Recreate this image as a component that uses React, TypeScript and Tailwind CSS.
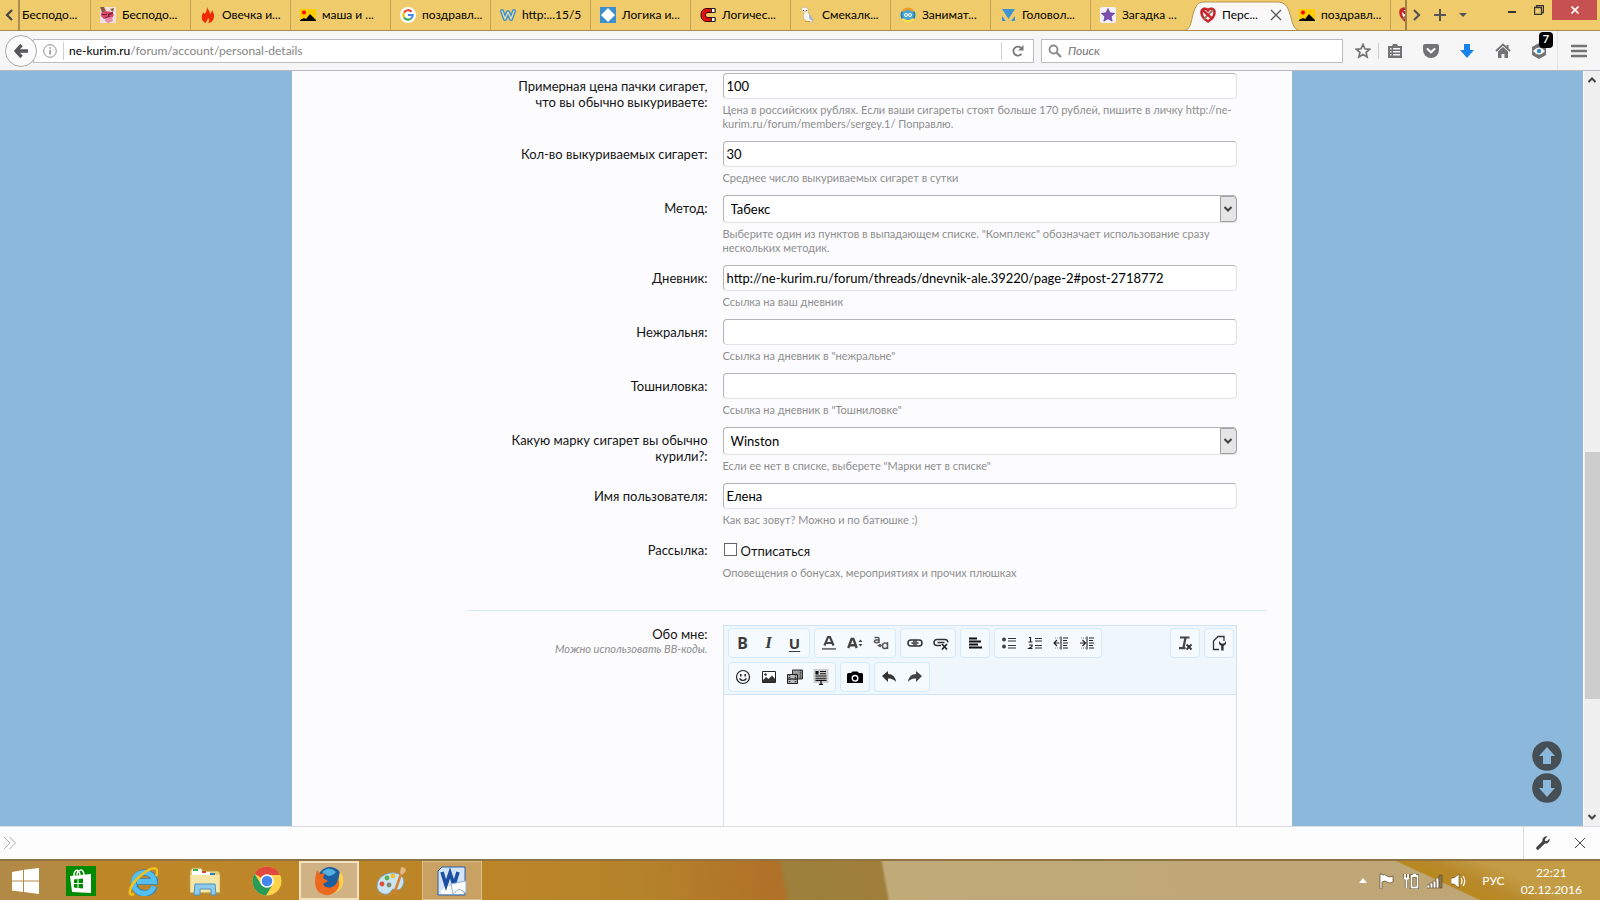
import { useState } from "react";
import type { ReactNode } from "react";

const tabs = [
  { title: "Бесподо...", icon: "anime" },
  { title: "Овечка и...", icon: "flame" },
  { title: "маша и ...", icon: "picture" },
  { title: "поздравл...", icon: "google" },
  { title: "http:...15/5", icon: "w" },
  { title: "Логика и...", icon: "diamond" },
  { title: "Логичес...", icon: "magnet" },
  { title: "Смекалк...", icon: "owl" },
  { title: "Занимат...", icon: "ring" },
  { title: "Головол...", icon: "triangle" },
  { title: "Загадка ...", icon: "star" },
];

function Favicon({ name }: { name: string }) {
  return (
    <svg viewBox="0 0 16 16" className="size-4 shrink-0" aria-hidden="true">
      {name === "anime" && (
        <>
          <path fill="#efe0e0" d="M0 0h16v16H0z" />
          <path fill="#8b5a3a" d="M0 0h4l2 4-4 2zM10 2l4-1-1 4z" />
          <path fill="#d9486e" d="M1 6l5-2 6 1 2 3-2 3-8 1-3-3z" />
          <path fill="#7a2038" d="M2 7h5v1H2zM8 7l5-2v1.500L8 9zM5 10l5-1v1l-4 1z" />
          <path fill="#e88ba6" d="M6 11l6-1 1 4-5 2-3-2z" />
        </>
      )}
      {name === "flame" && (
        <path fill="#f02a00" d="M7 0c1 3 3 4 3 7 1-1 2-2 2-4 2 3 3 7 1 10-1 2-3 3-5 3 2-2 1-4 0-5 0 2-2 3-2 5-3-1-5-4-4-7 0-2 1-2 1-4l1.500 2C6.500 5 7 3 7 0z" />
      )}
      {name === "picture" && (
        <>
          <path fill="#ffcc00" d="M0 2h16v12H0z" />
          <circle cx="4" cy="5.500" r="2" fill="#f00" />
          <path fill="#000" d="M0 14v-1l4-2 2 1 4-5 3 3 3 3v1z" />
        </>
      )}
      {name === "google" && (
        <>
          <circle cx="8" cy="8" r="8" fill="#fff" />
          <g fill="none" strokeWidth="2.200">
            <path stroke="#ea4335" d="M11.500 4.700A4.700 4.700 0 0 0 4 5.600" />
            <path stroke="#fbbc05" d="M4 5.600a4.700 4.700 0 0 0 0 4.900" />
            <path stroke="#34a853" d="M4 10.500a4.700 4.700 0 0 0 7 1" />
            <path stroke="#4285f4" d="M11 11.500A4.500 4.500 0 0 0 12.700 8H8" />
          </g>
        </>
      )}
      {name === "w" && (
        <g fill="none" strokeLinejoin="round" strokeLinecap="round">
          <path stroke="#3f8fc8" strokeWidth="4" d="M2 4l3 8 3-7 3 7 3-8" />
          <path stroke="#e3dfb4" strokeWidth="1.300" d="M2 4l3 8 3-7 3 7 3-8" />
        </g>
      )}
      {name === "diamond" && (
        <>
          <path fill="#3b8ed0" d="M0 0h16v16H0z" />
          <path fill="#fff" d="M8 1l7 7-7 7-7-7z" />
        </>
      )}
      {name === "magnet" && (
        <>
          <path fill="#e01010" stroke="#3a0000" d="M15 1.500H7C3 1.500 1 4 1 8s2 6.500 6 6.500h8v-4H8C6 10.500 5.500 9.500 5.500 8S6 5.500 8 5.500h7z" />
          <path fill="#fff" stroke="#222" d="M11.500 1.500h3.500v4h-3.500zM11.500 10.500h3.500v4h-3.500z" />
        </>
      )}
      {name === "owl" && (
        <>
          <path fill="#f4f4f0" stroke="#b5b09a" strokeWidth=".6" d="M2 1c2-1 5-1 6 1v4c3 2 5 5 5 9-3 0-6 0-8-2-2-2-2-4-1-7-2-2-3-3-2-5z" />
          <path fill="#333" d="M3 3h1v1H3zM6 3h1v1H6z" />
          <path fill="#e0a030" d="M4 4h2l-1 2zM5 14h5v1H5z" />
          <path fill="#a9b6c4" d="M9 7l4 5v3l-4-4z" />
        </>
      )}
      {name === "ring" && (
        <>
          <circle cx="8" cy="8" r="6" fill="#4ba6d6" />
          <path fill="none" stroke="#f29a1e" strokeWidth="2.400" d="M3 4a6.500 6.500 0 0 1 10 0" />
          <path fill="none" stroke="#ffe14d" strokeWidth="2.400" d="M3 12a6.500 6.500 0 0 0 10 0" />
          <path fill="none" stroke="#2383bd" strokeWidth="2" d="M2.500 4.500a7 7 0 0 0 0 7M13.500 4.500a7 7 0 0 1 0 7" />
          <circle cx="6" cy="8" r="1.500" fill="none" stroke="#fff" />
          <circle cx="10" cy="8" r="1.500" fill="none" stroke="#fff" />
        </>
      )}
      {name === "triangle" && <path fill="#3d94d1" d="M2 2h13L8.500 12zM2 9l4 5H2zM15 9l-4 5h4z" />}
      {name === "star" && (
        <>
          <rect width="16" height="16" rx="2" fill="#f3f0fa" />
          <path fill="#7c4fb0" stroke="#54308a" strokeWidth=".6" d="M8 1.500l2 4.300 4.700.5-3.500 3.200 1 4.700L8 11.800l-4.200 2.400 1-4.700L1.300 6.300 6 5.800z" />
        </>
      )}
      {name === "nosmoke" && (
        <>
          <path fill="#fff" stroke="#c9252b" strokeWidth="2.600" d="M8 14.500C4 12 1.500 9 1.500 5.500c0-4 4.500-5 6.500-2 2-3 6.500-2 6.500 2C14.500 9 12 12 8 14.500z" />
          <path stroke="#9a7a66" strokeWidth="2" d="M4 12l9-9" />
          <path stroke="#c9252b" strokeWidth="2.400" d="M2.500 3l10 9" />
        </>
      )}
    </svg>
  );
}

function TabBar() {
  return (
    <div className="flex h-[31px] shrink-0 items-stretch overflow-hidden border-b border-[#a9894c] bg-[#f0cb6c] text-[12px] text-black">
      <button aria-label="Прокрутить вкладки назад" className="flex w-5 shrink-0 items-center justify-center border-r-2 border-[#a98d4f]">
        <svg viewBox="0 0 8 12" className="h-3 w-2">
          <path d="M7 1L2 6l5 5" fill="none" stroke="#444" strokeWidth="2.200" />
        </svg>
      </button>
      <button className="w-[70px] shrink-0 truncate pl-0.5 text-left">Бесподо...</button>
      {tabs.map((tab) => (
        <button key={tab.title} className="flex w-[100px] shrink-0 items-center gap-1.5 whitespace-nowrap pl-2.5 shadow-[inset_1px_0_0_#c4a252]">
          <Favicon name={tab.icon} />
          {tab.title}
        </button>
      ))}
      <div className="relative flex w-[109px] shrink-0 items-center">
        <svg viewBox="0 0 120 31" className="absolute -bottom-px -left-2 h-[31px] w-[120px]" aria-hidden="true">
          <path d="M0 31C10 31 9 19 12 11C15 3 17 2 23 2H95C101 2 104 4 107 11C110 19 110 31 120 31Z" fill="#f8f8f8" stroke="#b8954a" />
        </svg>
        <button className="relative flex items-center gap-1.5 pl-2.5">
          <Favicon name="nosmoke" />
          Перс...
        </button>
        <button aria-label="Закрыть вкладку" className="relative ml-3">
          <svg viewBox="0 0 12 12" className="block size-3">
            <path d="M1 1l10 10M11 1L1 11" stroke="#555" strokeWidth="1.300" />
          </svg>
        </button>
      </div>
      <button className="flex w-[92px] shrink-0 items-center gap-1.5 whitespace-nowrap border-r border-[#c4a252]">
        <Favicon name="picture" />
        поздравл...
      </button>
      <div className="flex w-4 shrink-0 items-center overflow-hidden border-r-2 border-[#9d8248] pl-2">
        <Favicon name="nosmoke" />
      </div>
      <button aria-label="Прокрутить вкладки вперёд" className="flex w-5 shrink-0 items-center justify-center">
        <svg viewBox="0 0 8 12" className="h-3 w-2">
          <path d="M1 1l5 5-5 5" fill="none" stroke="#555" strokeWidth="2.200" />
        </svg>
      </button>
      <button aria-label="Новая вкладка" className="flex w-[26px] shrink-0 items-center justify-center">
        <svg viewBox="0 0 12 12" className="size-3">
          <path d="M6 0v12M0 6h12" stroke="#555" strokeWidth="2" />
        </svg>
      </button>
      <button aria-label="Список вкладок" className="flex w-5 shrink-0 items-center justify-center">
        <svg viewBox="0 0 8 4" className="h-1 w-2">
          <path d="M0 0h8L4 4z" fill="#555" />
        </svg>
      </button>
      <div className="mr-[3px] ml-auto flex h-5 items-stretch">
        <button aria-label="Свернуть" className="flex w-[26px] items-center justify-center">
          <svg viewBox="0 0 8 12" className="h-3 w-2">
            <path d="M0 7h8v2H0z" fill="#333" />
          </svg>
        </button>
        <button aria-label="Восстановить" className="flex w-[27px] items-center justify-center">
          <svg viewBox="0 0 10 10" className="size-2.5">
            <path d="M.5 2.500h7v7h-7zM2.500 2V.5h7v7H8" fill="none" stroke="#333" strokeWidth="1.300" />
          </svg>
        </button>
        <button aria-label="Закрыть" className="flex w-[45px] items-center justify-center bg-[#c75050]">
          <svg viewBox="0 0 8 8" className="size-2">
            <path d="M.5.500l7 7M7.500.500l-7 7" stroke="#fff" strokeWidth="1.600" />
          </svg>
        </button>
      </div>
    </div>
  );
}

function NavBar() {
  return (
    <div className="flex h-10 shrink-0 items-center border-b border-[#b8b8c0] bg-[#f6f6f7]">
      <button aria-label="Назад" className="z-10 ml-[5px] flex size-8 shrink-0 items-center justify-center rounded-full border border-[#a9a9ad] bg-[#fbfbfb]">
        <svg viewBox="0 0 14 14" className="size-3.5">
          <path d="M7.500 1L2 7l5.500 6M2 7h12" fill="none" stroke="#58585b" strokeWidth="3.400" />
        </svg>
      </button>
      <div className="-ml-1 flex h-6 flex-1 items-center border border-[#bcbcc4] bg-white pl-[9px]">
        <svg viewBox="0 0 14 14" className="size-3.5 shrink-0" aria-hidden="true">
          <circle cx="7" cy="7" r="6.300" fill="none" stroke="#8c8c8c" />
          <path d="M6.300 6h1.500v4.500H6.300zM6.300 3.300h1.500v1.500H6.300z" fill="#8c8c8c" />
        </svg>
        <div className="ml-[6px] h-[18px] w-px bg-[#d0d0d0]" />
        <a href="#address" className="ml-[5px] flex-1 text-[12px] text-[#858585]">
          <span className="text-black">ne-kurim.ru</span>/forum/account/personal-details
        </a>
        <button aria-label="Обновить" className="flex h-[18px] w-8 items-center justify-center border-l border-[#d0d0d0]">
          <svg viewBox="0 0 12 12" className="size-3">
            <path d="M9.500 8.800A4.500 4.500 0 1 1 9 2.800" fill="none" stroke="#777" strokeWidth="1.800" />
            <path d="M11.500 0v5.500H6z" fill="#777" />
          </svg>
        </button>
      </div>
      <label className="ml-[7px] flex h-6 w-[302px] shrink-0 items-center border border-[#bcbcc4] bg-white pl-1.5">
        <svg viewBox="0 0 14 14" className="size-3.5 shrink-0" aria-hidden="true">
          <circle cx="5.500" cy="5.500" r="4" fill="none" stroke="#8a8a8a" strokeWidth="1.800" />
          <path d="M8.500 8.500l4.500 4.500" stroke="#8a8a8a" strokeWidth="2.200" />
        </svg>
        <input aria-label="Поиск" placeholder="Поиск" className="ml-1.5 w-full bg-transparent text-[12px] outline-none placeholder:italic placeholder:text-[#757575]" />
      </label>
      <div className="flex h-full shrink-0 items-center text-[#737376]">
        <button aria-label="Добавить в закладки" className="ml-3">
          <svg viewBox="0 0 16 16" className="size-4">
            <path d="M8 1.500l1.900 4.300 4.700.5-3.500 3.100 1 4.600L8 11.600 3.900 14l1-4.600L1.400 6.300l4.700-.5z" fill="none" stroke="currentColor" strokeWidth="1.700" />
          </svg>
        </button>
        <div className="ml-[7px] h-4 w-px bg-[#cfcfcf]" />
        <button aria-label="Закладки" className="ml-2">
          <svg viewBox="0 0 16 16" className="size-4">
            <path d="M1 3h4l1-2h4l1 2h4v12H1z" fill="currentColor" />
            <path d="M3 5.800h1.500M6 5.800h7M3 8.800h1.500M6 8.800h7M3 11.800h1.500M6 11.800h7" stroke="#f6f6f7" strokeWidth="1.500" />
          </svg>
        </button>
        <button aria-label="Pocket" className="ml-5">
          <svg viewBox="0 0 16 16" className="size-4">
            <path d="M0 3q0-2 2-2h12q2 0 2 2v4a8 8 0 0 1-16 0z" fill="currentColor" />
            <path d="M4.500 6L8 9.300 11.500 6" fill="none" stroke="#fff" strokeWidth="2" strokeLinecap="round" />
          </svg>
        </button>
        <button aria-label="Загрузки" className="ml-5">
          <svg viewBox="0 0 16 16" className="size-4">
            <path d="M5 1h6v6h4l-7 8-7-8h4z" fill="#1a80ea" />
          </svg>
        </button>
        <button aria-label="Домой" className="ml-5">
          <svg viewBox="0 0 16 16" className="size-4">
            <path d="M1 8l7-6.500L15 8" fill="none" stroke="currentColor" strokeWidth="1.800" />
            <path d="M3 8.500l5-4.500 5 4.500V15H9.500v-4h-3v4H3zM11.500 2h2v3h-2z" fill="currentColor" />
          </svg>
        </button>
        <button aria-label="Ghostery: 7" className="relative ml-5">
          <svg viewBox="0 0 16 16" className="size-4">
            <path d="M8 0l7 4v8l-7 4-7-4V4z" fill="currentColor" />
            <path d="M2 8q6-7 12 0-6 7-12 0z" fill="#fff" />
            <circle cx="8" cy="8" r="2.200" fill="#2e8fc0" />
          </svg>
          <span className="absolute -top-[11px] left-2 flex h-4 w-3.5 items-center justify-center rounded-sm bg-black text-[11px] font-bold text-white">7</span>
        </button>
        <button aria-label="Меню" className="ml-2.5 flex h-full w-[43px] items-center justify-center border-l border-[#e4e4e6]">
          <svg viewBox="0 0 16 14" className="h-3.5 w-4">
            <path d="M1 2h14M1 7h14M1 12h14" stroke="currentColor" strokeWidth="2.600" strokeLinecap="round" />
          </svg>
        </button>
      </div>
    </div>
  );
}

const inputStyle =
  "block h-[26px] w-full rounded-[4px] border border-[#e2e2e5] border-t-[#b4b4b8] border-l-[#b4b4b8] bg-white pl-[3px] text-[13px] text-black outline-none";

function Row({ id, label, hint, children }: { id: string; label: string; hint: string; children: ReactNode }) {
  return (
    <div className="flex">
      <label htmlFor={id} className="w-[241px] shrink-0 pt-[5px] pl-8 text-right text-[13px] leading-4 text-[#141414]">
        {label}
      </label>
      <div className="ml-[15px] flex-1 pb-2.5">
        {children}
        <p className="mt-1 text-[11px] leading-[14px] text-[#8e8e8e]">{hint}</p>
      </div>
    </div>
  );
}

function TextRow({ id, label, hint, value = "" }: { id: string; label: string; hint: string; value?: string }) {
  return (
    <Row id={id} label={label} hint={hint}>
      <input id={id} type="text" defaultValue={value} className={inputStyle} />
    </Row>
  );
}

function SelectRow({ id, label, hint, value }: { id: string; label: string; hint: string; value: string }) {
  return (
    <Row id={id} label={label} hint={hint}>
      <div className="relative">
        <select id={id} className="block h-7 w-full appearance-none rounded-[4px] border border-[#e2e2e5] border-t-[#b4b4b8] border-l-[#b4b4b8] bg-white pt-px pl-[7px] text-[13px] text-black outline-none">
          <option>{value}</option>
        </select>
        <span className="pointer-events-none absolute inset-y-px right-0 flex w-[17px] items-center justify-center rounded-r-sm border border-[#a0a0a3] bg-[#e6e6e6]">
          <svg viewBox="0 0 8 6" className="h-1.5 w-2">
            <path d="M.5 1L4 4.500 7.500 1" fill="none" stroke="#444" strokeWidth="2" />
          </svg>
        </span>
      </div>
    </Row>
  );
}

const toolIcons: Record<string, ReactNode> = {
  "Цвет текста": <><path d="M3.500 10.500L7 2h2l3.500 8.500M5 8h6" fill="none" stroke="#444" strokeWidth="2.200" /><path d="M1 13h14v1.800H1z" fill="#777" /></>,
  "Размер": <><path d="M1.300 13L4.600 4h1.800l3.300 9M2.800 10.300h5.500" fill="none" stroke="#444" strokeWidth="2.400" /><path d="M11.500 7l2-2.500 2 2.500zM11.500 9l2 2.500 2-2.500z" fill="#444" /></>,
  "Шрифт": <><path d="M1.500 2.500h3q1.500 0 1.500 1.500V8M6 5H3Q1.500 5 1.500 6.300T3 7.700q2 0 3-1M14.500 7v7M14.500 9.500Q13.500 8 12 8q-2.500 0-2.500 2.800T12 13.500q1.500 0 2.500-1.500M4.500 10.500h3M6.500 9L8 10.500 6.500 12" fill="none" stroke="#555" strokeWidth="1.500" /></>,
  "Ссылка": <><rect x="1" y="5" width="14" height="6" rx="3" fill="none" stroke="#333" strokeWidth="1.500" /><path d="M4.500 8h7M6.500 5.500l1 1.200M9.500 5.500l-1 1.200M6.500 10.500l1-1.200M9.500 10.500l-1-1.200" stroke="#333" strokeWidth="1.500" /></>,
  "Убрать ссылку": <><path d="M8 10.500H4a3 3 0 0 1 0-6h8q2.500 0 3 2.800M4.500 7.500h7" fill="none" stroke="#333" strokeWidth="1.500" /><path d="M9 9l5 5.500M14 9l-5 5.500" stroke="#222" strokeWidth="1.700" /></>,
  "Выравнивание": <path d="M2 3.500h8M2 6.500h12M2 9.500h9M2 12.500h13" stroke="#111" strokeWidth="1.800" />,
  "Маркированный список": <><circle cx="3" cy="4.500" r="2" fill="#444" /><circle cx="3" cy="11.500" r="2" fill="#444" /><path d="M7 3.500h8M7 6h8M7 10.500h8M7 13h8" stroke="#333" /></>,
  "Нумерованный список": <><path d="M2 2.500h1.500v4.500M1.500 7h4M2 10h3v1.500L2 13.500h3.500" fill="none" stroke="#222" strokeWidth="1.200" /><path d="M8 3.500h7M8 6h7M8 10.500h7M8 13h7" stroke="#333" /></>,
  "Уменьшить отступ": <><path d="M8 1.500v13M10 3h5M10 5.500h4M10 8h5M10 10.500h4M10 13h5" stroke="#222" strokeWidth="1.100" /><path d="M2 3h5M2 13h5" stroke="#888" strokeDasharray="1 1" /><path d="M6.500 8H1M4 5L1 8l3 3" fill="none" stroke="#222" strokeWidth="1.200" /></>,
  "Увеличить отступ": <><path d="M8 1.500v13M10 3h5M10 5.500h4M10 8h5M10 10.500h4M10 13h5" stroke="#222" strokeWidth="1.100" /><path d="M2 3h5M2 13h5" stroke="#888" strokeDasharray="1 1" /><path d="M1 8h5M3.500 5l3 3-3 3" fill="none" stroke="#222" strokeWidth="1.200" /></>,
  "Очистить": <><path d="M3 2.500h9.500M8.500 2.500L6.500 12.500M2 13.200h6.500" stroke="#444" strokeWidth="2.200" /><path d="M9.500 9.500l5 5M14.500 9.500l-5 5" stroke="#333" strokeWidth="1.800" /></>,
  "Исходный код": <><path d="M8 14.500H2.500V6L7 1.500h6V6" fill="none" stroke="#333" strokeWidth="1.300" /><path d="M8 6v3l2.200 2V15.500h2.400V11L15 9V6l-2 2.500h-2.800z" fill="#333" /></>,
  "Смайлы": <><circle cx="8" cy="8" r="6.500" fill="none" stroke="#222" strokeWidth="1.200" /><path d="M5 5h1.500v2.500H5zM9.500 5H11v2.500H9.500z" fill="#222" /><path d="M4.500 9.500q3.500 4 7 0" fill="none" stroke="#222" strokeWidth="1.200" /></>,
  "Изображение": <><path d="M1.500 2.500h13v11h-13z" fill="#fff" stroke="#222" /><circle cx="4.500" cy="5.500" r="1.300" fill="#333" /><path d="M2 13v-2l3-3 2.500 2L11 6.500l3 3.500v3z" fill="#333" /></>,
  "Медиа": <><path d="M5.500 1h10v9h-10z" fill="#999" stroke="#333" /><path d="M.5 5.500h10v9H.5z" fill="#bbb" stroke="#222" /><path d="M2.500 5.500v9M8.500 5.500v9M13.500 1v9" stroke="#333" strokeWidth="1.600" strokeDasharray="1.200 1" /><path d="M1 10h9" stroke="#222" strokeWidth="1.200" /></>,
  "Вставить": <><path d="M.5 0h15v14H.5z" fill="#ccc" /><path d="M2.500 2h3v3.500h-3z" fill="#111" /><path d="M7 2.500h6M7 4.800h6M2.500 7h11M2.500 9.200h11M2.500 11.400h11" stroke="#111" strokeWidth="1.100" /><path d="M8 12v4M6 15.500h4" stroke="#111" strokeWidth="1.300" /></>,
  "Камера": <><path d="M0 5.500Q0 4 1.500 4H4l1.500-1.500h5L12 4h2.500Q16 4 16 5.500V14H0z" fill="#000" /><circle cx="8" cy="9.300" r="2.800" fill="none" stroke="#fff" strokeWidth="1.400" /></>,
  "Отменить": <path d="M1 7l6-5v3q7 0 8 8-3-4-8-3.500V13z" fill="#333" />,
  "Повторить": <path d="M15 7L9 2v3q-7 0-8 8 3-4 8-3.500V13z" fill="#444" />,
};

function ToolGroup({ items }: { items: string[] }) {
  return (
    <div className="flex rounded-sm border border-[#d3e9f8] bg-[#f4fafe] p-px">
      {items.map((item) => (
        <button key={item} type="button" title={item} className="flex size-[26px] items-center justify-center font-['Noto_Sans',sans-serif] text-[16px] font-bold text-[#3c3c3c]">
          {item === "B" && <span>B</span>}
          {item === "I" && <span className="font-['Liberation_Serif',serif] text-[17px] italic">I</span>}
          {item === "U" && <span className="text-[15px] underline underline-offset-2">U</span>}
          {toolIcons[item] && (
            <svg viewBox="0 0 16 16" className="size-4">
              {toolIcons[item]}
            </svg>
          )}
        </button>
      ))}
    </div>
  );
}

function Editor() {
  return (
    <div className="flex-1 border border-[#cfe3f2]">
      <div className="flex flex-col gap-1 border-b border-[#cfe3f2] bg-[#f0f7fc] py-0.5 pr-0.5 pl-1">
        <div className="flex gap-1">
          <ToolGroup items={["B", "I", "U"]} />
          <ToolGroup items={["Цвет текста", "Размер", "Шрифт"]} />
          <ToolGroup items={["Ссылка", "Убрать ссылку"]} />
          <ToolGroup items={["Выравнивание"]} />
          <ToolGroup items={["Маркированный список", "Нумерованный список", "Уменьшить отступ", "Увеличить отступ"]} />
          <div className="ml-auto flex gap-1">
            <ToolGroup items={["Очистить"]} />
            <ToolGroup items={["Исходный код"]} />
          </div>
        </div>
        <div className="flex gap-1">
          <ToolGroup items={["Смайлы", "Изображение", "Медиа", "Вставить"]} />
          <ToolGroup items={["Камера"]} />
          <ToolGroup items={["Отменить", "Повторить"]} />
        </div>
      </div>
      <textarea id="about" className="block h-40 w-full resize-none bg-[#fdfdff] outline-none" />
    </div>
  );
}

function ProfileForm() {
  const [unsubscribed, setUnsubscribed] = useState(false);
  return (
    <form className="mx-auto w-[1000px] max-w-full shrink-0 self-stretch overflow-hidden bg-[#fcfcfe] pt-0.5 pr-[25px] pl-[175px]">
      <div className="pr-[30px]">
        <TextRow id="price" label="Примерная цена пачки сигарет, что вы обычно выкуриваете:" value="100" hint="Цена в российских рублях. Если ваши сигареты стоят больше 170 рублей, пишите в личку http://ne-kurim.ru/forum/members/sergey.1/ Поправлю." />
        <TextRow id="count" label="Кол-во выкуриваемых сигарет:" value="30" hint="Среднее число выкуриваемых сигарет в сутки" />
        <SelectRow id="method" label="Метод:" value="Табекс" hint={'Выберите один из пунктов в выпадающем списке. "Комплекс" обозначает использование сразу нескольких методик.'} />
        <TextRow id="diary" label="Дневник:" value="http://ne-kurim.ru/forum/threads/dnevnik-ale.39220/page-2#post-2718772" hint="Ссылка на ваш дневник" />
        <TextRow id="food" label="Нежральня:" hint={'Ссылка на дневник в "нежральне"'} />
        <TextRow id="sick" label="Тошниловка:" hint={'Ссылка на дневник в "Тошниловке"'} />
        <SelectRow id="brand" label="Какую марку сигарет вы обычно курили?:" value="Winston" hint={'Если ее нет в списке, выберете "Марки нет в списке"'} />
        <TextRow id="name" label="Имя пользователя:" value="Елена" hint="Как вас зовут? Можно и по батюшке :)" />
        <Row id="mailing" label="Рассылка:" hint="Оповещения о бонусах, мероприятиях и прочих плюшках">
          <label className="flex h-[25px] items-center gap-1 pt-1 text-[13px] text-[#141414]">
            <input id="mailing" type="checkbox" checked={unsubscribed} onChange={(e) => setUnsubscribed(e.target.checked)} className="mb-1 ml-px size-[13px] appearance-none border border-[#666] bg-white checked:bg-[#666]" />
            Отписаться
          </label>
        </Row>
      </div>
      <hr className="mt-5 mb-3.5 border-[#d3e7f6]" />
      <div className="flex pr-[30px]">
        <label htmlFor="about" className="w-[241px] shrink-0 pt-px text-right text-[13px] leading-4 text-[#141414]">
          Обо мне:
          <span className="block text-[11px] leading-[14px] text-[#8e8e8e] italic">Можно использовать BB-коды.</span>
        </label>
        <div className="ml-[15px] flex flex-1">
          <Editor />
        </div>
      </div>
    </form>
  );
}

function Scrollbar() {
  return (
    <div className="flex w-[17px] shrink-0 flex-col items-center border-l border-white bg-[#f0f0f0] py-1.5">
      <svg viewBox="0 0 8 6" className="h-1.5 w-2">
        <path d="M.5 5L4 1.500 7.500 5" fill="none" stroke="#444" strokeWidth="2" />
      </svg>
      <div className="w-full flex-1" />
      <div className="h-[247px] w-[15px] bg-[#cdcdcd]" />
      <div className="h-[115px]" />
      <svg viewBox="0 0 8 6" className="h-1.5 w-2">
        <path d="M.5 1L4 4.500 7.500 1" fill="none" stroke="#444" strokeWidth="2" />
      </svg>
    </div>
  );
}

function Taskbar() {
  return (
    <footer className="flex h-[41px] shrink-0 items-stretch border-t-2 border-[#8d7345] bg-[linear-gradient(25deg,transparent_87.800%,#b8891f_88%,#b8892a_90%,#c39c45_93%),linear-gradient(80deg,#b18a47_0%,#b58a40_5%,#bf8728_6%,#bb8528_32%,#b5832a_40%,#b07028_48.800%,#9c803c_49.200%,#a07e3c_55.200%,#c0aa78_55.400%,#bfa577_100%)] text-[12px] text-white">
      <button aria-label="Пуск" className="flex w-[50px] items-center justify-center">
        <svg viewBox="0 0 27 26" className="h-[26px] w-[27px]">
          <path fill="#fff" d="M0 4l11-2v10.500H0zM12 1.800L27 0v12.500H12zM0 13.500h11V24L0 22.500zM12 13.500h15V26l-15-2z" />
        </svg>
      </button>
      <button aria-label="Магазин" className="flex w-[62px] items-center justify-center">
        <svg viewBox="0 0 30 30" className="size-[30px]">
          <path fill="#008a00" d="M0 0h30v30H0z" />
          <path fill="#fff" d="M4 10l21-2v19l-19-1z" />
          <path fill="none" stroke="#fff" strokeWidth="1.500" d="M8 10c0-7 5-8 6-1M11 9c0-6 7-7 7 0" />
          <path fill="#008a00" d="M8 13.500l3.500-.5v4H8zM12.500 13l4.500-.5V17h-4.500zM8 18h3.500v4L8 21.600zM12.500 18H17v4.500l-4.500-.5z" />
        </svg>
      </button>
      <button aria-label="Internet Explorer" className="flex w-[62px] items-center justify-center">
        <svg viewBox="0 0 30 30" className="size-[30px]">
          <path fill="none" stroke="#2a86c4" strokeWidth="6.500" d="M26.500 20.500A10.500 10.500 0 1 1 27 15.500H9" />
          <path fill="none" stroke="#55c0ef" strokeWidth="5" d="M26 20.500A10.500 10.500 0 1 1 26.500 15.500H9" />
          <path fill="none" stroke="#f4c21c" strokeWidth="2.500" d="M6 28C-1 31 1 21 9 13S27-1 29 4c1 2 0 4-1 6" />
        </svg>
      </button>
      <button aria-label="Проводник" className="flex w-[62px] items-center justify-center">
        <svg viewBox="0 0 32 30" className="h-[30px] w-8">
          <path fill="#e7cf78" stroke="#b99b4e" strokeWidth=".8" d="M1 5l2-3h9l2 3h15l2 2v20H1z" />
          <path fill="#f5e6a8" d="M1.500 9h29v17h-29z" />
          <path fill="#fff" d="M3 3h9l1 3h8l1 3H3z" />
          <path fill="#3fae49" d="M4 3h5v2H4z" />
          <path fill="#d64933" d="M13 5h4v2h-4z" />
          <path fill="#2a7fc4" d="M21 7h5v2h-5z" />
          <path fill="#8ecbec" stroke="#4a93bd" d="M5 29l1-11h20l1 11h-5v-6H11v6z" />
        </svg>
      </button>
      <button aria-label="Chrome" className="flex w-[62px] items-center justify-center">
        <svg viewBox="0 0 30 30" className="size-[30px]">
          <circle cx="15" cy="15" r="14.500" fill="#ffd24a" />
          <path fill="#de4b3c" d="M15 15L2.400 7.800A14.500 14.500 0 0 1 28.200 9H15z" />
          <path fill="#2a9a58" d="M2.400 7.800A14.500 14.500 0 0 0 14 29.500l7-11.500-12 0z" />
          <circle cx="15" cy="15" r="6.800" fill="#fff" />
          <circle cx="15" cy="15" r="5.300" fill="#4486f0" />
        </svg>
      </button>
      <button aria-label="Firefox" className="mx-px flex w-[60px] items-center justify-center border-2 border-[#f4e3c0] bg-[#d0b285]">
        <svg viewBox="0 0 30 30" className="size-[30px]">
          <circle cx="16" cy="13" r="12" fill="#1d5f9e" />
          <path fill="#4fb2e0" d="M8 6q7-7 14 0-3 4-8 4z" />
          <path fill="#ffd04a" d="M26 5q7 10 0 19l-8 4 6-12z" />
          <path fill="#ec6a1e" d="M3 4l3 4 5-1-2 5 5 3-5 3q3 5 9 3 5-2 6-8 3 6-1 11-5 6-12 5Q1 27 1 16 1 10 3 4z" />
        </svg>
      </button>
      <button aria-label="Paint" className="flex w-[62px] items-center justify-center">
        <svg viewBox="0 0 30 30" className="size-[30px]">
          <path fill="#c9e3f0" stroke="#7ba6bd" d="M1 20C1 11 11 6 19 7s11 8 7 14-8 0-10 3-4 5-8 4-7-4-7-8z" />
          <circle cx="6" cy="18" r="2.400" fill="#e0503c" />
          <circle cx="11" cy="12" r="2.400" fill="#59b24a" />
          <circle cx="17" cy="10" r="2.400" fill="#f0c030" />
          <circle cx="13" cy="19" r="2.400" fill="#7d8f6a" />
          <path stroke="#d9822b" strokeWidth="2.500" d="M18 28l7-20" />
          <path fill="#e3b98c" d="M24 7l1-6 4 1 1 3-4 4z" />
        </svg>
      </button>
      <button aria-label="Word" className="flex w-[60px] items-center justify-center border border-[#dcc08a] bg-[#c9a263]">
        <svg viewBox="0 0 30 30" className="size-[30px]">
          <path fill="#d3e4f8" stroke="#2c5ea8" d="M5 1h23v28H1V5z" />
          <path fill="#fff" d="M9 20h17v8H4v-3z" />
          <path fill="none" stroke="#1c4fa0" strokeWidth="3.600" d="M5 6l4 13 4-12 4 12 4-13" />
          <path fill="#fff" stroke="#8fb0d8" d="M14 18l15-3v12l-7-4-6 5z" />
        </svg>
      </button>
      <div className="ml-auto flex items-center">
        <svg viewBox="0 0 8 5" className="mr-3 h-[5px] w-2">
          <path fill="#fff" d="M0 5l4-5 4 5z" />
        </svg>
        <svg viewBox="0 0 16 16" className="mr-2 size-4">
          <path fill="#fff" stroke="#5a4624" strokeWidth=".7" d="M1 1h2v1q3-1 5 1t6 0v6q-4 2-6 0T3 9v7H1z" />
        </svg>
        <svg viewBox="0 0 16 16" className="mr-2 size-4">
          <path fill="none" stroke="#5a4624" strokeWidth="3.200" d="M8.500 3h6v11.500h-6zM10 1.500h3M2 1v4M5 1v4M1 5.500h5M3.500 6v9" />
          <path fill="none" stroke="#fff" strokeWidth="1.800" d="M8.500 3h6v11.500h-6zM10 1.500h3M2 1v4M5 1v4M1 5.500h5M3.500 6v9" />
        </svg>
        <svg viewBox="0 0 16 16" className="mr-2 size-4">
          <path fill="#fff" stroke="#5a4624" strokeWidth=".6" d="M0 12h3v3H0zM3 10h3v5H3zM6 8h3v7H6zM9 5h3v10H9z" />
          <path fill="#8a7650" stroke="#5a4624" strokeWidth=".6" d="M12 2h3v13h-3z" />
        </svg>
        <svg viewBox="0 0 16 16" className="mr-[15px] size-4">
          <path fill="#fff" stroke="#5a4624" strokeWidth=".6" d="M0 5h3l5-4v14l-5-4H0z" />
          <path fill="none" stroke="#fff" strokeWidth="1.200" d="M10 5q2 3 0 6M12 3q3.500 5 0 10" />
        </svg>
        <span className="mr-4">РУС</span>
        <div className="mr-[18px] text-center leading-[17px]">
          <div>22:21</div>
          <div>02.12.2016</div>
        </div>
      </div>
    </footer>
  );
}

export default function App() {
  return (
    <div className="flex h-screen flex-col overflow-hidden font-['Lato',sans-serif]">
      <TabBar />
      <NavBar />
      <main className="relative flex min-h-0 flex-1 bg-[#8cb8db]">
        <div className="flex min-w-0 flex-1 overflow-hidden">
          <ProfileForm />
        </div>
        <div className="absolute right-[38px] bottom-[23px] flex flex-col gap-0.5">
          <a href="#top" aria-label="Наверх">
            <svg viewBox="0 0 30 30" className="block size-[30px]">
              <circle cx="15" cy="15" r="14.800" fill="#454f55" />
              <path fill="#8cb8db" d="M15 6l8 9h-4v8h-8v-8H7z" />
            </svg>
          </a>
          <a href="#bottom" aria-label="Вниз">
            <svg viewBox="0 0 30 30" className="block size-[30px]">
              <circle cx="15" cy="15" r="14.800" fill="#454f55" />
              <path fill="#8cb8db" d="M15 24l8-9h-4V7h-8v8H7z" />
            </svg>
          </a>
        </div>
        <Scrollbar />
      </main>
      <div className="flex h-[33px] shrink-0 items-center border-t border-[#d9dbe0] bg-[#fdfdfd]">
        <svg viewBox="0 0 14 12" className="ml-[3px] h-3 w-3.5">
          <path d="M1 0l6 6-6 6M6.500 0l6 6-6 6" fill="none" stroke="#aaa" />
        </svg>
        <div className="ml-auto flex h-full items-center border-l border-[#d9dbe0] pl-3">
          <button aria-label="Настройки">
            <svg viewBox="0 0 14 14" className="block size-3.5">
              <path d="M1.800 12.200L8 6" stroke="#444" strokeWidth="3.200" strokeLinecap="round" />
              <path d="M11.500.500L9 3v2h2l2.500-2.500a4 4 0 0 1-6.500 4A4 4 0 0 1 11.500.500z" fill="#444" />
            </svg>
          </button>
          <button aria-label="Закрыть панель" className="mr-[15px] ml-[25px]">
            <svg viewBox="0 0 10 10" className="block size-2.5">
              <path d="M0 0l10 10M10 0L0 10" stroke="#444" />
            </svg>
          </button>
        </div>
      </div>
      <Taskbar />
    </div>
  );
}
